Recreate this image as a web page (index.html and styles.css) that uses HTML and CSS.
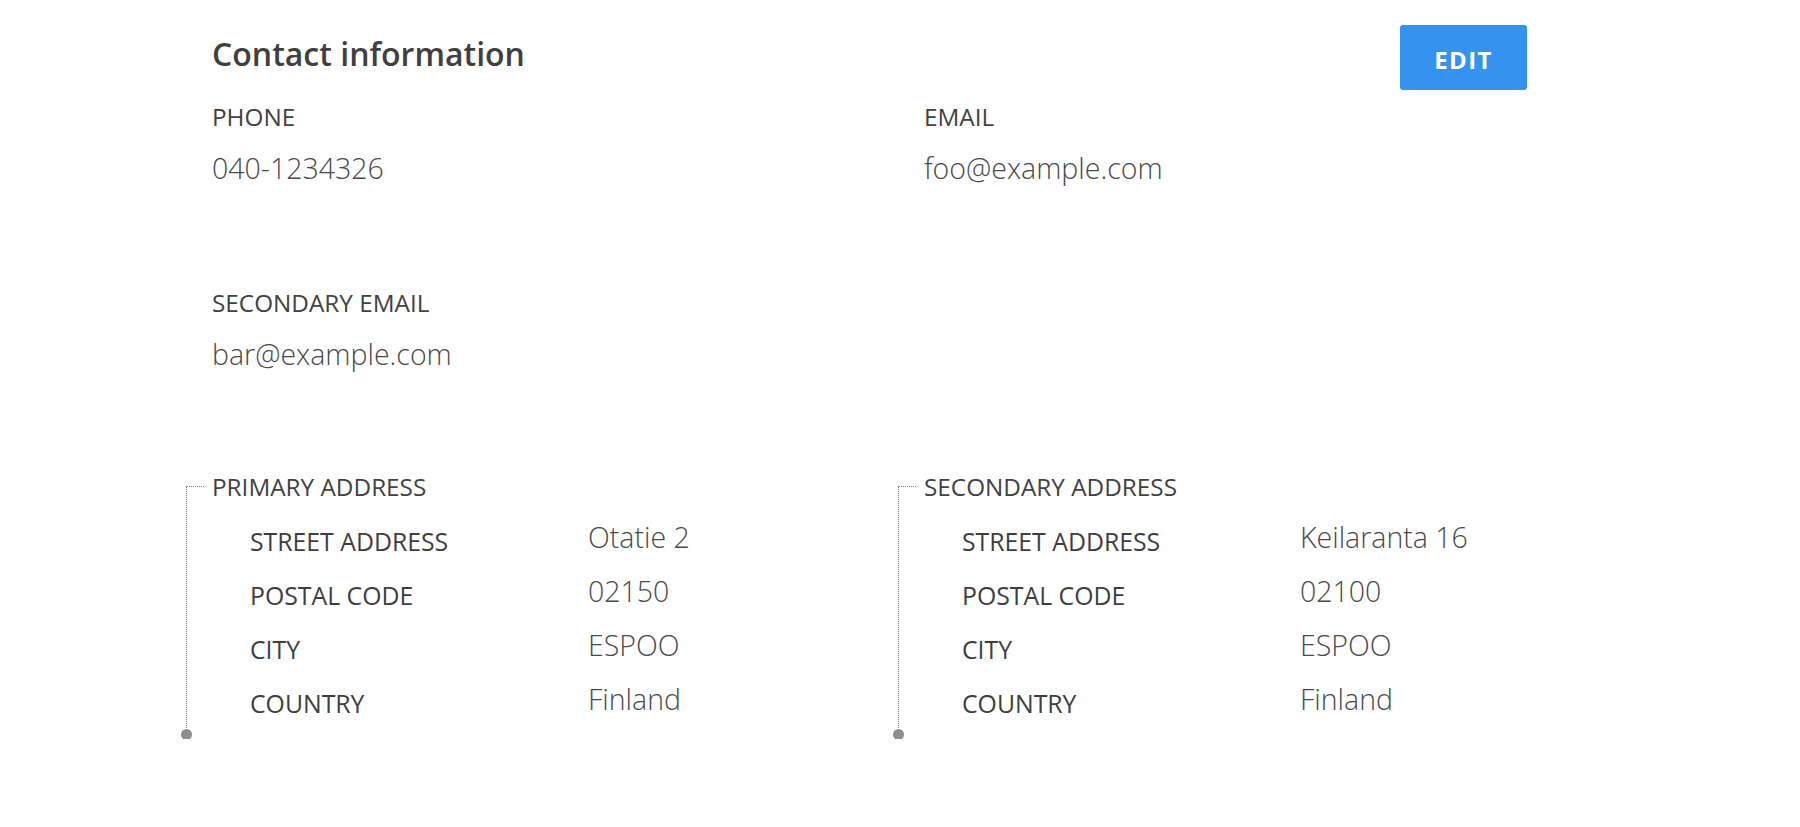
FILE: index.html
```html
<!DOCTYPE html>
<html lang="en">
<head>
<meta charset="utf-8">
<title>Contact information</title>
<link rel="stylesheet" href="styles.css">
</head>
<body>
<main class="page">
  <header class="page-header">
    <h1 class="title">Contact information</h1>
    <button class="edit-btn" type="button">EDIT</button>
  </header>

  <section class="fields">
    <div class="field">
      <div class="label">PHONE</div>
      <div class="value">040-1234326</div>
    </div>
    <div class="field">
      <div class="label">EMAIL</div>
      <div class="value">foo@example.com</div>
    </div>
    <div class="field field-row2">
      <div class="label">SECONDARY EMAIL</div>
      <div class="value">bar@example.com</div>
    </div>
  </section>

  <section class="addresses">
    <div class="address">
      <div class="label">PRIMARY ADDRESS</div>
      <dl class="address-grid">
        <dt>STREET ADDRESS</dt><dd>Otatie 2</dd>
        <dt>POSTAL CODE</dt><dd>02150</dd>
        <dt>CITY</dt><dd>ESPOO</dd>
        <dt>COUNTRY</dt><dd>Finland</dd>
      </dl>
    </div>
    <div class="address">
      <div class="label">SECONDARY ADDRESS</div>
      <dl class="address-grid">
        <dt>STREET ADDRESS</dt><dd>Keilaranta 16</dd>
        <dt>POSTAL CODE</dt><dd>02100</dd>
        <dt>CITY</dt><dd>ESPOO</dd>
        <dt>COUNTRY</dt><dd>Finland</dd>
      </dl>
    </div>
  </section>
</main>
</body>
</html>
```

FILE: styles.css
```css
* { box-sizing: border-box; }

html, body {
  margin: 0;
  padding: 0;
  background: #ffffff;
}

body {
  font-family: "Open Sans", "Noto Sans", sans-serif;
  color: #454545;
}

.page {
  margin-left: 212px;
  width: 1315px;
  padding-top: 25px;
}

.page-header {
  display: flex;
  justify-content: space-between;
  align-items: flex-start;
}

.title {
  margin: 9px 0 0 0;
  font-size: 32px;
  line-height: 40px;
  font-weight: 600;
  color: #3f3f3f;
}

.edit-btn {
  width: 127px;
  height: 65px;
  border: none;
  border-radius: 3px;
  background: #3592ee;
  color: #ffffff;
  font-family: "Open Sans", sans-serif;
  font-weight: 700;
  font-size: 24px;
  letter-spacing: 1.3px;
  display: flex;
  align-items: center;
  justify-content: center;
  padding: 4px 0 0 0;
}

.fields {
  display: grid;
  grid-template-columns: 712px 1fr;
  margin-top: 11px;
  row-gap: 99px;
}

.label {
  font-size: 24.3px;
  line-height: 32px;
  font-weight: 400;
  color: #424242;
}

.value {
  font-size: 28.5px;
  line-height: 40px;
  font-weight: 300;
  color: #4a4a4a;
  margin-top: 15px;
}

.addresses {
  display: grid;
  grid-template-columns: 712px 1fr;
  margin-top: 97px;
}

.address {
  position: relative;
  padding-bottom: 9px;
}

.address::before {
  content: "";
  position: absolute;
  left: -26px;
  top: 15px;
  bottom: 5px;
  width: 17px;
  border-left: 1px dotted #888888;
  border-top: 1px dotted #888888;
}

.address::after {
  content: "";
  position: absolute;
  left: -31px;
  bottom: -1px;
  width: 11px;
  height: 11px;
  border-radius: 50%;
  background: #8e8e8e;
}

.address-grid {
  display: grid;
  grid-template-columns: 338px 1fr;
  align-items: start;
  margin: 11px 0 0 38px;
}

.address-grid dt {
  font-size: 24.8px;
  line-height: 54px;
  font-weight: 500;
  color: #3e3e3e;
}

.address-grid dd {
  margin: 0;
  padding-top: 1px;
  font-size: 28.5px;
  line-height: 44px;
  font-weight: 300;
  color: #4a4a4a;
}
```
